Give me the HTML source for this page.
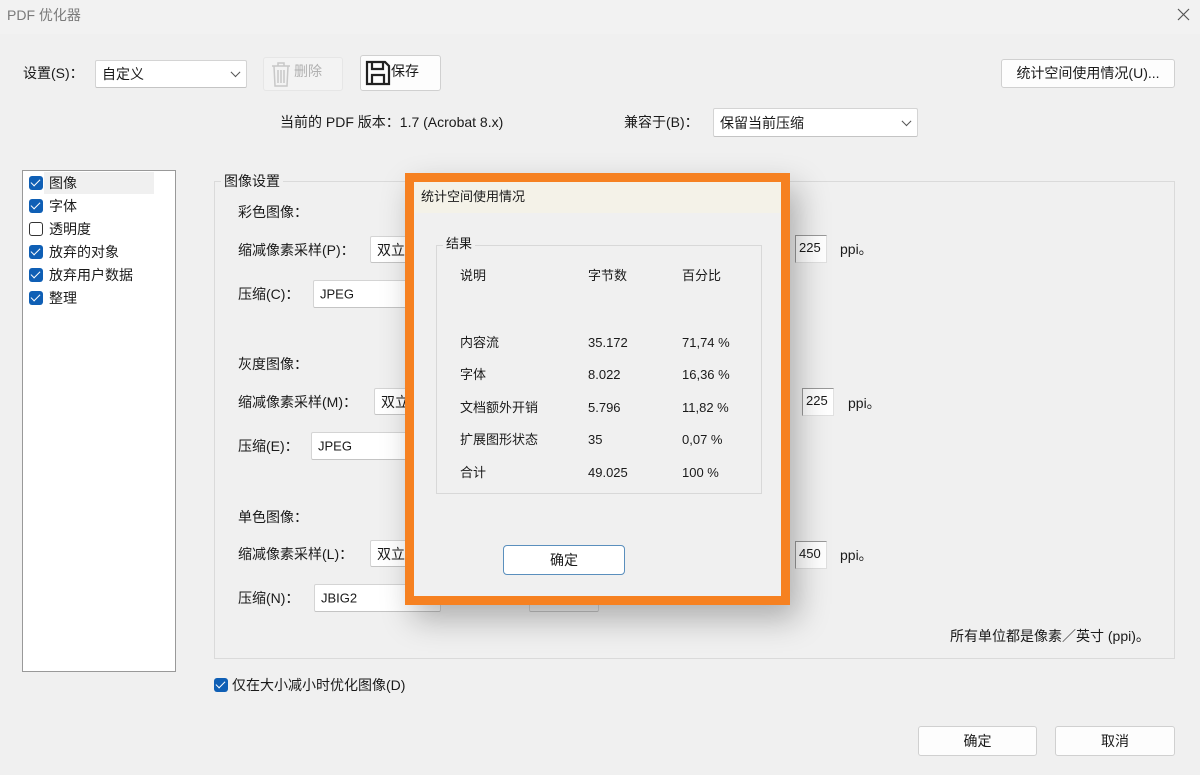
<!DOCTYPE html>
<html><head><meta charset="utf-8"><style>
*{box-sizing:border-box;margin:0;padding:0}
body{width:1200px;height:775px;background:#f0f0f0;font-family:"Liberation Sans","Noto Sans CJK SC",sans-serif;font-size:14px;color:#1a1a1a;position:relative;overflow:hidden}
.a{position:absolute;white-space:nowrap}
.t{position:absolute;white-space:nowrap;line-height:16px}
.sel{position:absolute;background:#fff;border:1px solid #d4d4d4;border-bottom-color:#c4c4c4;border-radius:2px}
.sel span{position:absolute;left:6px;top:50%;transform:translateY(-50%)}
.chev{position:absolute;right:7px;top:50%;width:7px;height:7px;border-right:1px solid #555;border-bottom:1px solid #555;transform:translateY(-75%) rotate(45deg)}
.btn{position:absolute;background:#fdfdfd;border:1px solid #d0d0d0;border-radius:3px;text-align:center}
.cb{position:absolute;width:14px;height:14px;border-radius:3px;background:#0f5fb5}
.cb:after{content:"";position:absolute;left:4px;top:1px;width:4px;height:8px;border-right:1.6px solid #fff;border-bottom:1.6px solid #fff;transform:rotate(45deg)}
.cb.off{background:#fff;border:1px solid #333}
.cb.off:after{display:none}
.inp{position:absolute;background:#fff;border:1px solid #999;border-right-color:#e0e0e0;border-bottom-color:#e0e0e0;font-size:13px;padding-left:3px;line-height:24px}
</style></head><body>
<div class="a" style="left:0;top:0;width:1200px;height:34px;background:#f2f2f2"></div>
<div class="t" style="left:7px;top:7px;color:#7a7a7a">PDF 优化器</div>
<svg class="a" style="left:1177px;top:8px" width="13" height="13"><path d="M1 1L12 12M12 1L1 12" stroke="#555" stroke-width="1.2"/></svg>

<div class="t" style="left:23px;top:65px">设置(S)：</div>
<div class="sel" style="left:95px;top:60px;width:152px;height:28px"><span>自定义</span><i class="chev"></i></div>
<div class="btn" style="left:263px;top:57px;width:80px;height:34px;background:#f3f3f3;border-color:#e6e6e6"></div>
<svg class="a" style="left:270px;top:60px" width="22" height="28"><path d="M2 6H20M8 6V3H14V6M4 6L5 26H17L18 6M8 10V23M11 10V23M14 10V23" stroke="#c8c8c8" stroke-width="1.5" fill="none"/></svg>
<div class="t" style="left:294px;top:63px;color:#b0b0b0">删除</div>
<div class="btn" style="left:360px;top:55px;width:81px;height:36px"></div>
<svg class="a" style="left:365px;top:60px" width="26" height="26"><path d="M2 2H20L24 6V24H2Z" stroke="#222" stroke-width="2.2" fill="none"/><path d="M7 2V9H18V2M7 24V15H19V24" stroke="#222" stroke-width="2.2" fill="none"/></svg>
<div class="t" style="left:391px;top:63px">保存</div>
<div class="btn" style="left:1001px;top:59px;width:174px;height:29px;line-height:27px">统计空间使用情况(U)...</div>

<div class="t" style="left:280px;top:114px">当前的 PDF 版本：1.7 (Acrobat 8.x)</div>
<div class="t" style="left:624px;top:114px">兼容于(B)：</div>
<div class="sel" style="left:713px;top:108px;width:205px;height:29px"><span>保留当前压缩</span><i class="chev"></i></div>

<div class="a" style="left:22px;top:170px;width:154px;height:502px;background:#fff;border:1px solid #999"></div>
<div class="a" style="left:44px;top:172px;width:110px;height:22px;background:#f0f0f0"></div>
<div class="cb" style="left:29px;top:176px"></div><div class="t" style="left:49px;top:175px">图像</div>
<div class="cb" style="left:29px;top:199px"></div><div class="t" style="left:49px;top:198px">字体</div>
<div class="cb off" style="left:29px;top:222px"></div><div class="t" style="left:49px;top:221px">透明度</div>
<div class="cb" style="left:29px;top:245px"></div><div class="t" style="left:49px;top:244px">放弃的对象</div>
<div class="cb" style="left:29px;top:268px"></div><div class="t" style="left:49px;top:267px">放弃用户数据</div>
<div class="cb" style="left:29px;top:291px"></div><div class="t" style="left:49px;top:290px">整理</div>

<div class="a" style="left:214px;top:181px;width:961px;height:478px;border:1px solid #dadada"></div>
<div class="t" style="left:221px;top:173px;background:#f0f0f0;padding:0 3px">图像设置</div>

<div class="t" style="left:238px;top:204px">彩色图像：</div>
<div class="t" style="left:238px;top:242px">缩减像素采样(P)：</div>
<div class="sel" style="left:370px;top:236px;width:70px;height:27px"><span>双立</span></div>
<div class="t" style="left:238px;top:286px">压缩(C)：</div>
<div class="sel" style="left:313px;top:280px;width:128px;height:28px"><span style="font-size:13px">JPEG</span></div>
<div class="inp" style="left:795px;top:235px;width:32px;height:28px">225</div><div class="t" style="left:840px;top:241px">ppi。</div>

<div class="t" style="left:238px;top:356px">灰度图像：</div>
<div class="t" style="left:238px;top:394px">缩减像素采样(M)：</div>
<div class="sel" style="left:374px;top:388px;width:70px;height:27px"><span>双立</span></div>
<div class="t" style="left:238px;top:438px">压缩(E)：</div>
<div class="sel" style="left:311px;top:432px;width:128px;height:28px"><span style="font-size:13px">JPEG</span></div>
<div class="inp" style="left:802px;top:388px;width:32px;height:28px">225</div><div class="t" style="left:848px;top:395px">ppi。</div>

<div class="t" style="left:238px;top:509px">单色图像：</div>
<div class="t" style="left:238px;top:546px">缩减像素采样(L)：</div>
<div class="sel" style="left:370px;top:540px;width:70px;height:27px"><span>双立</span></div>
<div class="t" style="left:238px;top:590px">压缩(N)：</div>
<div class="sel" style="left:314px;top:584px;width:127px;height:28px"><span style="font-size:13px">JBIG2</span></div>
<div class="sel" style="left:529px;top:584px;width:70px;height:28px;background:#f0f0f0"></div>
<div class="inp" style="left:795px;top:541px;width:32px;height:28px">450</div><div class="t" style="left:840px;top:547px">ppi。</div>

<div class="t" style="left:950px;top:628px">所有单位都是像素／英寸 (ppi)。</div>
<div class="cb" style="left:214px;top:678px"></div><div class="t" style="left:232px;top:677px">仅在大小减小时优化图像(D)</div>
<div class="btn" style="left:918px;top:726px;width:119px;height:30px;line-height:28px">确定</div>
<div class="btn" style="left:1055px;top:726px;width:120px;height:30px;line-height:28px">取消</div>

<div class="a" style="left:405px;top:173px;width:385px;height:432px;background:#f68121;box-shadow:8px 14px 30px rgba(0,0,0,0.28)"></div>
<div class="a" style="left:414px;top:182px;width:367px;height:414px;background:#f0f0f0"></div>
<div class="a" style="left:414px;top:182px;width:367px;height:31px;background:#f4f2e8"></div>
<div class="t" style="left:421px;top:189px;font-size:13px">统计空间使用情况</div>
<div class="a" style="left:436px;top:245px;width:326px;height:249px;border:1px solid #d8d8d8"></div>
<div class="t" style="left:443px;top:236px;background:#f0f0f0;padding:0 3px;font-size:13px">结果</div>
<div style="font-size:13px">
<div class="t" style="left:460px;top:268px">说明</div><div class="t" style="left:588px;top:268px">字节数</div><div class="t" style="left:682px;top:268px">百分比</div>
<div class="t" style="left:460px;top:335px">内容流</div><div class="t" style="left:588px;top:335px">35.172</div><div class="t" style="left:682px;top:335px">71,74 %</div>
<div class="t" style="left:460px;top:367px">字体</div><div class="t" style="left:588px;top:367px">8.022</div><div class="t" style="left:682px;top:367px">16,36 %</div>
<div class="t" style="left:460px;top:400px">文档额外开销</div><div class="t" style="left:588px;top:400px">5.796</div><div class="t" style="left:682px;top:400px">11,82 %</div>
<div class="t" style="left:460px;top:432px">扩展图形状态</div><div class="t" style="left:588px;top:432px">35</div><div class="t" style="left:682px;top:432px">0,07 %</div>
<div class="t" style="left:460px;top:465px">合计</div><div class="t" style="left:588px;top:465px">49.025</div><div class="t" style="left:682px;top:465px">100 %</div>
</div>
<div class="btn" style="left:503px;top:545px;width:122px;height:30px;line-height:28px;background:#fff;border-color:#5a8fbd;border-radius:4px">确定</div>
</body></html>
